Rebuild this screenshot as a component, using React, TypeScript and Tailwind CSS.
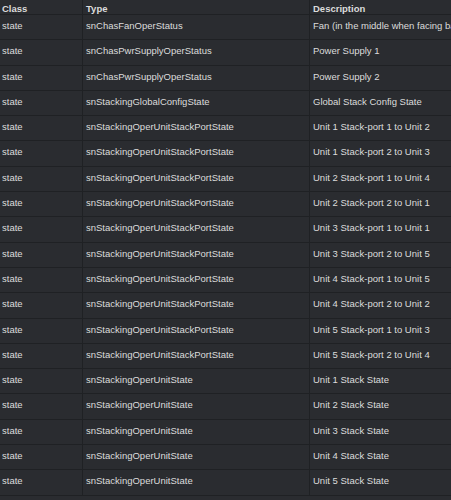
const rows: [string, string][] = [
  ['snChasFanOperStatus', 'Fan (in the middle when facing back side)'],
  ['snChasPwrSupplyOperStatus', 'Power Supply 1'],
  ['snChasPwrSupplyOperStatus', 'Power Supply 2'],
  ['snStackingGlobalConfigState', 'Global Stack Config State'],
  ['snStackingOperUnitStackPortState', 'Unit 1 Stack-port 1 to Unit 2'],
  ['snStackingOperUnitStackPortState', 'Unit 1 Stack-port 2 to Unit 3'],
  ['snStackingOperUnitStackPortState', 'Unit 2 Stack-port 1 to Unit 4'],
  ['snStackingOperUnitStackPortState', 'Unit 2 Stack-port 2 to Unit 1'],
  ['snStackingOperUnitStackPortState', 'Unit 3 Stack-port 1 to Unit 1'],
  ['snStackingOperUnitStackPortState', 'Unit 3 Stack-port 2 to Unit 5'],
  ['snStackingOperUnitStackPortState', 'Unit 4 Stack-port 1 to Unit 5'],
  ['snStackingOperUnitStackPortState', 'Unit 4 Stack-port 2 to Unit 2'],
  ['snStackingOperUnitStackPortState', 'Unit 5 Stack-port 1 to Unit 3'],
  ['snStackingOperUnitStackPortState', 'Unit 5 Stack-port 2 to Unit 4'],
  ['snStackingOperUnitState', 'Unit 1 Stack State'],
  ['snStackingOperUnitState', 'Unit 2 Stack State'],
  ['snStackingOperUnitState', 'Unit 3 Stack State'],
  ['snStackingOperUnitState', 'Unit 4 Stack State'],
  ['snStackingOperUnitState', 'Unit 5 Stack State'],
]

export default function App() {
  return (
    <div
      className="h-[500px] w-[451px] overflow-hidden bg-[#2a2c30] text-[9.5px] text-[#dcdcdc]"
      style={{ fontFamily: '"Liberation Sans", Arial, sans-serif' }}
    >
      <div className="grid grid-cols-[83px_227px_1fr] h-[15px] border-b border-[#1f2124] font-bold whitespace-nowrap">
        <div className="pl-0.5 pt-[2px] border-r border-[#1f2124]">Class</div>
        <div className="pl-[3px] pt-[2px] border-r border-[#1f2124]">Type</div>
        <div className="pl-[3px] pt-[2px] overflow-hidden">Description</div>
      </div>
      {rows.map(([type, desc], i) => (
        <div key={i} className="grid grid-cols-[83px_227px_1fr] h-[25.3px] border-b border-[#1f2124] whitespace-nowrap">
          <div className="pl-0.5 pt-[4px] border-r border-[#1f2124]">state</div>
          <div className="pl-[3px] pt-[4px] border-r border-[#1f2124]">{type}</div>
          <div className="pl-[3px] pt-[4px] overflow-hidden">{desc}</div>
        </div>
      ))}
    </div>
  )
}
